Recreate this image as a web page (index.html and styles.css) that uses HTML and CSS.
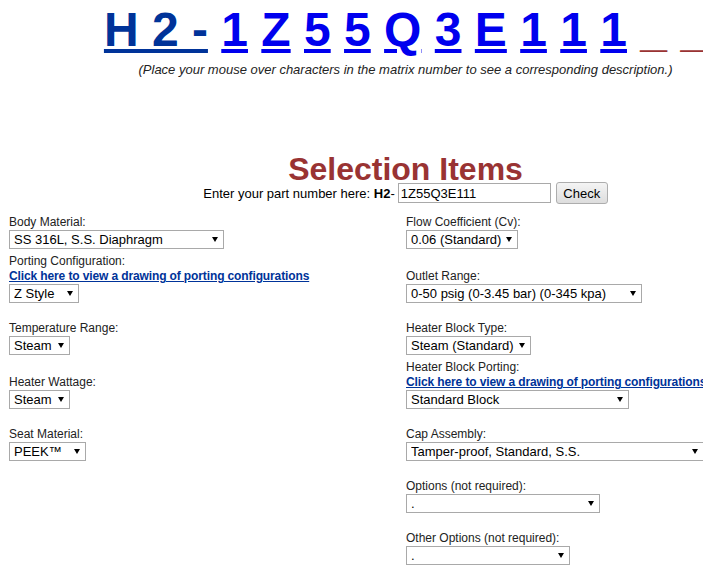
FILE: index.html
```html
<!DOCTYPE html>
<html lang="en">
<head>
	<meta charset="UTF-8">
	<title>Part Number Matrix</title>
	<link rel="stylesheet" href="styles.css">
</head>
<body>
	<div class="page">
		<!-- matrix number -->
		<div class="matrix">
			<a class="pre" href="#">H 2 -</a>
			<a href="#">1</a>
			<a href="#">Z</a>
			<a href="#">5</a>
			<a href="#">5</a>
			<a href="#">Q</a>
			<a href="#">3</a>
			<a href="#">E</a>
			<a href="#">1</a>
			<a href="#">1</a>
			<a href="#">1</a>
			<span class="blank">_</span>
			<span class="blank">_</span>
		</div>
		<p class="hint">(Place your mouse over characters in the matrix number to see a corresponding description.)</p>

		<h1 class="title">Selection Items</h1>
		<form class="partform">
			<span>Enter your part number here:&nbsp;</span><b>H2</b>-
			<input type="text" value="1Z55Q3E111">
			<input type="button" value="Check">
		</form>

		<!-- selections -->
		<div class="fields">
			<div class="field top">
				<label>Body Material:</label>
				<span class="pick"><select class="w-body"><option>SS 316L, S.S. Diaphragm</option><option>Hastelloy C-22, Hastelloy Diaphragm</option></select></span>
			</div>
			<div class="field top">
				<label>Flow Coefficient (Cv):</label>
				<span class="pick"><select class="w-flow"><option>0.06 (Standard)</option><option>0.2</option></select></span>
			</div>

			<div class="field linked">
				<label>Porting Configuration:</label>
				<a href="#">Click here to view a drawing of porting configurations</a>
				<span class="pick"><select class="w-port"><option>Z Style</option><option>L Style</option></select></span>
			</div>
			<div class="field">
				<label>Outlet Range:</label>
				<span class="pick"><select class="w-outlet"><option>0-50 psig (0-3.45 bar) (0-345 kpa)</option><option>0-100 psig (0-6.9 bar) (0-690 kpa)</option></select></span>
			</div>

			<div class="field">
				<label>Temperature Range:</label>
				<span class="pick"><select class="w-steam"><option>Steam</option></select></span>
			</div>
			<div class="field">
				<label>Heater Block Type:</label>
				<span class="pick"><select class="w-block"><option>Steam (Standard)</option><option>Electric</option></select></span>
			</div>

			<div class="field">
				<label>Heater Wattage:</label>
				<span class="pick"><select class="w-steam"><option>Steam</option></select></span>
			</div>
			<div class="field linked">
				<label>Heater Block Porting:</label>
				<a href="#">Click here to view a drawing of porting configurations</a>
				<span class="pick"><select class="w-blockport"><option>Standard Block</option></select></span>
			</div>

			<div class="field">
				<label>Seat Material:</label>
				<span class="pick"><select class="w-seat"><option>PEEK™</option><option>PCTFE</option></select></span>
			</div>
			<div class="field">
				<label>Cap Assembly:</label>
				<span class="pick"><select class="w-cap"><option>Tamper-proof, Standard, S.S.</option></select></span>
			</div>

			<div class="field right">
				<label>Options (not required):</label>
				<span class="pick"><select class="w-opts"><option>.</option></select></span>
			</div>

			<div class="field right">
				<label>Other Options (not required):</label>
				<span class="pick"><select class="w-other"><option>.</option></select></span>
			</div>
		</div>
	</div>
</body>
</html>
```

FILE: styles.css
```css
html {
	overflow-x: hidden;
}

body {
	margin: 0 8px;
	font-family: "Liberation Sans", Arial, sans-serif;
	color: #222;
	background-color: #FFF;
}

.page {
	width: 795px;
}

/* matrix number */
.matrix {
	padding-top: 2px;
	font-size: 48px;
	font-weight: bold;
	line-height: 55px;
	text-align: center;
	white-space: nowrap;
}

.matrix a {
	color: #0000EE;
}

.matrix a.pre {
	color: #003399;
}

.matrix .blank {
	color: #933;
}

.hint {
	margin: 5px 0 0;
	font-size: 13px;
	font-style: italic;
	line-height: 15px;
	text-align: center;
}

.title {
	margin: 80px 0 0;
	font-size: 32px;
	line-height: 25px;
	color: #933;
	text-align: center;
}

/* part number form */
.partform {
	display: flex;
	justify-content: center;
	align-items: center;
	height: 22px;
	margin: 0;
	font-size: 13px;
	color: #000;
}

.partform input[type=text] {
	width: 153px;
	height: 20px;
	margin: 0 0 0 3px;
	padding: 0 2px;
	box-sizing: border-box;
	border: 1px solid #A9A9A9;
	font: 13px "Liberation Sans", Arial, sans-serif;
}

.partform input[type=button] {
	width: 52px;
	height: 22px;
	margin: 0 0 0 5px;
	padding: 0;
	border: 1px solid #ADADAD;
	border-radius: 3px;
	background: linear-gradient(#F4F4F4, #DDD);
	font: 13px "Liberation Sans", Arial, sans-serif;
	color: #000;
}

/* selections */
.fields {
	display: grid;
	grid-template-columns: 397px 1fr;
	align-items: end;
}

.field {
	display: flex;
	flex-direction: column;
	align-items: flex-start;
	padding: 15px 1px 3px;
}

.field.top {
	padding-top: 11px;
}

.field.linked {
	padding-top: 2px;
}

.field.right {
	grid-column: 2;
}

.field label {
	font-size: 12px;
	line-height: 15px;
}

.field a {
	font-size: 12px;
	font-weight: bold;
	line-height: 15px;
	letter-spacing: -0.12px;
	color: #003399;
	white-space: nowrap;
}

.pick {
	position: relative;
	display: inline-block;
}

.pick::after {
	content: "";
	position: absolute;
	right: 6px;
	top: 7px;
	border-left: 3px solid transparent;
	border-right: 3px solid transparent;
	border-top: 5px solid #000;
	pointer-events: none;
}

.pick select {
	display: block;
	height: 19px;
	margin: 0;
	padding: 0 4px;
	box-sizing: border-box;
	border: 1px solid #A9A9A9;
	border-radius: 0;
	background-color: #FFF;
	font: 13px "Liberation Sans", Arial, sans-serif;
	color: #000;
	appearance: none;
	-webkit-appearance: none;
}

.w-body { width: 215px; }
.w-port { width: 70px; }
.w-steam { width: 61px; }
.w-seat { width: 77px; }
.w-flow { width: 112px; }
.w-outlet { width: 236px; }
.w-block { width: 125px; }
.w-blockport { width: 223px; }
.w-cap { width: 298px; }
.w-opts { width: 194px; }
.w-other { width: 164px; }
```
